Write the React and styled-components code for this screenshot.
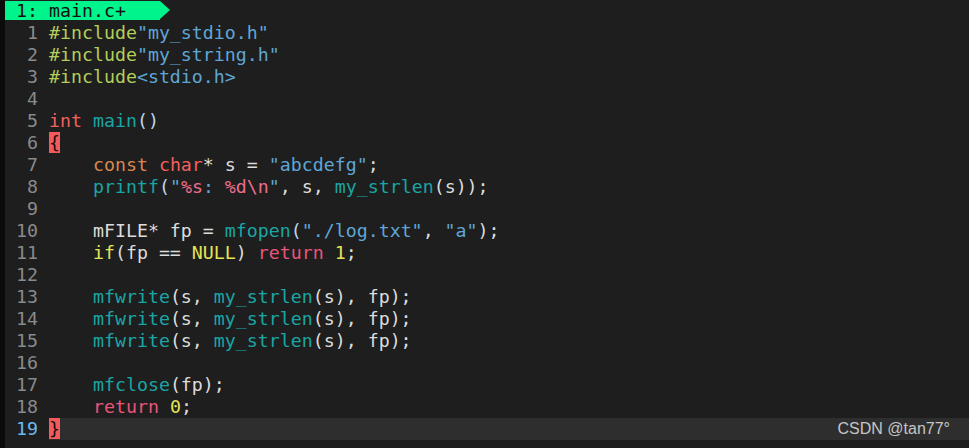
import React from "react";
import styled, { createGlobalStyle } from "styled-components";

const Global = createGlobalStyle`
  html, body { margin: 0; padding: 0; background: #1e1e1e; }
  body { width: 969px; height: 448px; overflow: hidden; }
`;

const C = {
  def: "#dcdcdc",
  pre: "#b3cf5a",
  str: "#5ea6d6",
  kw: "#f0605c",
  fn: "#1aa5a5",
  cst: "#d98752",
  spec: "#ee6d8c",
  ret: "#e9557a",
  yel: "#e4e456",
  par: "#bcd8ee",
};

const Screen = styled.div`
  display: flex;
  width: 969px;
  height: 448px;
  background: #1e1e1e;
  position: relative;
  font-family: "DejaVu Sans Mono", "Liberation Mono", monospace;
  font-size: 18.25px;
`;

const Strip = styled.div`
  width: 5px;
  flex: none;
  background: #0b0b0b;
`;

const Editor = styled.div`
  flex: 1;
  display: flex;
  flex-direction: column;
`;

const TabLine = styled.div`
  height: 22px;
  display: flex;
  align-items: flex-start;
  padding-top: 1px;
  box-sizing: border-box;
`;

const Tab = styled.div`
  height: 19px;
  width: 155px;
  background: #00f48c;
  color: #101010;
  line-height: 19px;
  padding-left: 11px;
  box-sizing: border-box;
  white-space: pre;
`;

const TabArrow = styled.div`
  width: 0;
  height: 0;
  border-top: 9.5px solid transparent;
  border-bottom: 9.5px solid transparent;
  border-left: 10px solid #00f48c;
`;

const Row = styled.div`
  display: flex;
  height: 22px;
  line-height: 22px;
  white-space: pre;
`;

const LineNo = styled.span`
  width: 33px;
  flex: none;
  text-align: right;
  padding-right: 11px;
  color: ${(p) => (p.$current ? "#6ab9ef" : "#8a8a8a")};
`;

const Code = styled.span`
  flex: 1;
  color: ${C.def};
  background: ${(p) => (p.$current ? "#2e2e2e" : "transparent")};
`;

const Tok = styled.span`
  color: ${(p) => p.$c};
`;

const Brace = styled.span`
  background: #f45a5a;
  color: #111;
`;

const Watermark = styled.div`
  position: absolute;
  right: 19px;
  top: 418px;
  height: 22px;
  line-height: 22px;
  font-family: "Liberation Sans", Arial, sans-serif;
  font-size: 16px;
  color: #c6c6c6;
`;

const t = (text, c = C.def) => ({ text, c });

const lines = [
  [t("#include", C.pre), t('"my_stdio.h"', C.str)],
  [t("#include", C.pre), t('"my_string.h"', C.str)],
  [t("#include", C.pre), t("<stdio.h>", C.str)],
  [],
  [t("int", C.kw), t(" "), t("main", C.fn), t("()", C.par)],
  [{ brace: "{" }],
  [t("    "), t("const", C.cst), t(" "), t("char", C.kw), t("* s = "), t('"abcdefg"', C.str), t(";")],
  [t("    "), t("printf", C.fn), t("(", C.par), t('"', C.str), t("%s", C.spec), t(": ", C.str), t("%d", C.spec), t("\\n", C.spec), t('"', C.str), t(", s, "), t("my_strlen", C.fn), t("(s));")],
  [],
  [t("    mFILE* fp = "), t("mfopen", C.fn), t("(", C.par), t('"./log.txt"', C.str), t(", "), t('"a"', C.str), t(");")],
  [t("    "), t("if", C.yel), t("(fp == "), t("NULL", C.yel), t(") "), t("return", C.ret), t(" "), t("1", C.yel), t(";")],
  [],
  [t("    "), t("mfwrite", C.fn), t("(s, "), t("my_strlen", C.fn), t("(s), fp);")],
  [t("    "), t("mfwrite", C.fn), t("(s, "), t("my_strlen", C.fn), t("(s), fp);")],
  [t("    "), t("mfwrite", C.fn), t("(s, "), t("my_strlen", C.fn), t("(s), fp);")],
  [],
  [t("    "), t("mfclose", C.fn), t("(fp);")],
  [t("    "), t("return", C.ret), t(" "), t("0", C.yel), t(";")],
  [{ brace: "}" }],
];

export default function App() {
  return (
    <>
      <Global />
      <Screen>
        <Strip />
        <Editor>
          <TabLine>
            <Tab>1: main.c+</Tab>
            <TabArrow />
          </TabLine>
          {lines.map((toks, i) => {
            const current = i === lines.length - 1;
            return (
              <Row key={i}>
                <LineNo $current={current}>{i + 1}</LineNo>
                <Code $current={current}>
                  {toks.map((tk, j) =>
                    tk.brace ? (
                      <Brace key={j}>{tk.brace}</Brace>
                    ) : (
                      <Tok key={j} $c={tk.c}>
                        {tk.text}
                      </Tok>
                    )
                  )}
                </Code>
              </Row>
            );
          })}
        </Editor>
        <Watermark>CSDN @tan77°</Watermark>
      </Screen>
    </>
  );
}
